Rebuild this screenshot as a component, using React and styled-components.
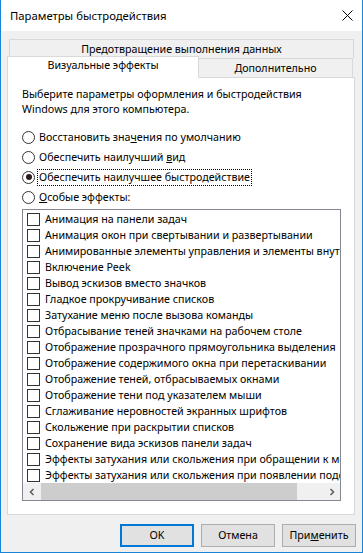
import React from 'react';
import styled, { createGlobalStyle } from 'styled-components';

const Global = createGlobalStyle`
  html, body {
    margin: 0;
    padding: 0;
    background: #ffffff;
  }
  body {
    font-family: "Segoe UI", "Noto Sans", sans-serif;
    font-size: 10.7px;
    color: #000000;
  }
`;

const Window = styled.div`
  width: 363px;
  height: 553px;
  box-sizing: border-box;
  border: 1px solid #1883d7;
  border-top: none;
  background: #f0f0f0;
  display: flex;
  flex-direction: column;
`;

const TitleBar = styled.div`
  height: 31px;
  flex: none;
  background: #ffffff;
  display: flex;
  align-items: center;
  justify-content: space-between;
  padding: 0 9px 0 9px;
  font-size: 11.3px;
`;

const Title = styled.span`
  line-height: 15px;
`;

const CloseButton = styled.div`
  width: 12px;
  height: 12px;
  display: flex;
  align-items: center;
  justify-content: center;
`;

const Body = styled.div`
  flex: 1;
  padding: 8px 7px 0 6px;
  display: flex;
  flex-direction: column;
`;

const TabStrip = styled.div`
  display: flex;
  flex-direction: column;
`;

const TabRow = styled.div`
  display: flex;
  align-items: flex-end;
  height: ${(p) => p.$h}px;
  margin-top: ${(p) => p.$mt || 0}px;
  padding-left: ${(p) => p.$pl || 0}px;
  position: relative;
  z-index: ${(p) => p.$z || 0};
`;

const Tab = styled.div`
  box-sizing: border-box;
  width: ${(p) => p.$w}px;
  height: ${(p) => (p.$active ? 22 : 19)}px;
  margin-bottom: ${(p) => (p.$active ? -1 : 0)}px;
  margin-left: ${(p) => p.$ml || 0}px;
  border: 1px solid #d9d9d9;
  border-bottom: none;
  background: ${(p) => (p.$active ? '#ffffff' : '#f0f0f0')};
  text-align: center;
  line-height: 15px;
  padding-top: ${(p) => (p.$active ? 1 : 2)}px;
  position: relative;
  z-index: ${(p) => (p.$active ? 2 : 1)};
  white-space: nowrap;
`;

const Panel = styled.div`
  box-sizing: border-box;
  height: 438px;
  background: #ffffff;
  border: 1px solid #d9d9d9;
  padding: 9px 12px 0 14px;
  display: flex;
  flex-direction: column;
`;

const Intro = styled.p`
  margin: 0 0 10px 0;
  line-height: 15px;
`;

const RadioRow = styled.div`
  height: 20px;
  display: flex;
  align-items: center;
`;

const RadioCircle = styled.span`
  box-sizing: border-box;
  width: 13px;
  height: 13px;
  border-radius: 50%;
  border: 1px solid #333333;
  background: #ffffff;
  display: flex;
  align-items: center;
  justify-content: center;
  flex: none;

  &::after {
    content: '';
    display: ${(p) => (p.$checked ? 'block' : 'none')};
    width: 6px;
    height: 6px;
    border-radius: 50%;
    background: #2b1a1a;
  }
`;

const RadioLabel = styled.span`
  margin-left: 2px;
  padding: 0 1px;
  line-height: 15px;
  border: 1px dotted ${(p) => (p.$focus ? '#000000' : 'transparent')};
  white-space: nowrap;
`;

const ListBox = styled.div`
  box-sizing: border-box;
  margin-top: 2px;
  width: 319px;
  height: 292px;
  border: 1px solid #828790;
  background: #ffffff;
  padding-top: 1px;
  display: flex;
  flex-direction: column;
  overflow: hidden;
`;

const Items = styled.div`
  flex: 1;
  overflow: hidden;
`;

const Item = styled.div`
  height: 16px;
  display: flex;
  align-items: center;
  padding-left: 4px;
  white-space: nowrap;
`;

const CheckBox = styled.span`
  box-sizing: border-box;
  width: 13px;
  height: 13px;
  border: 1px solid #333333;
  background: #ffffff;
  flex: none;
  margin-right: 5px;
`;

const HScroll = styled.div`
  height: 17px;
  flex: none;
  background: #f0f0f0;
  display: flex;
  align-items: center;
`;

const ScrollArrow = styled.div`
  width: 17px;
  height: 17px;
  flex: none;
  display: flex;
  align-items: center;
  justify-content: center;
`;

const Track = styled.div`
  flex: 1;
  height: 17px;
  display: flex;
  align-items: stretch;
`;

const Thumb = styled.div`
  width: 256px;
  margin-left: 1px;
  background: #cdcdcd;
`;

const Buttons = styled.div`
  display: flex;
  justify-content: flex-end;
  gap: 7px;
  margin-top: 9px;
  margin-right: -1px;
`;

const Button = styled.div`
  box-sizing: border-box;
  width: 74px;
  height: 23px;
  background: #e1e1e1;
  border: 1px solid ${(p) => (p.$default ? '#0078d7' : '#adadad')};
  box-shadow: ${(p) => (p.$default ? 'inset 0 0 0 1px #0078d7' : 'none')};
  display: flex;
  align-items: center;
  justify-content: center;
  line-height: 15px;
`;

const effects = [
  'Анимация на панели задач',
  'Анимация окон при свертывании и развертывании',
  'Анимированные элементы управления и элементы внутри окна',
  'Включение Peek',
  'Вывод эскизов вместо значков',
  'Гладкое прокручивание списков',
  'Затухание меню после вызова команды',
  'Отбрасывание теней значками на рабочем столе',
  'Отображение прозрачного прямоугольника выделения',
  'Отображение содержимого окна при перетаскивании',
  'Отображение теней, отбрасываемых окнами',
  'Отображение тени под указателем мыши',
  'Сглаживание неровностей экранных шрифтов',
  'Скольжение при раскрытии списков',
  'Сохранение вида эскизов панели задач',
  'Эффекты затухания или скольжения при обращении к меню',
  'Эффекты затухания или скольжения при появлении подсказок',
];

const Chevron = ({ dir }) => (
  <svg width="8" height="8" viewBox="0 0 8 8">
    <path
      d={dir === 'left' ? 'M5.5 1 L2.5 4 L5.5 7' : 'M2.5 1 L5.5 4 L2.5 7'}
      fill="none"
      stroke="#606060"
      strokeWidth="1.6"
    />
  </svg>
);

export default function App() {
  return (
    <>
      <Global />
      <Window>
        <TitleBar>
          <Title>Параметры быстродействия</Title>
          <CloseButton>
            <svg width="11" height="11" viewBox="0 0 11 11">
              <path d="M0.5 0.5 L10.5 10.5 M10.5 0.5 L0.5 10.5" stroke="#000" strokeWidth="1" />
            </svg>
          </CloseButton>
        </TitleBar>
        <Body>
          <TabStrip>
            <TabRow $h={19} $pl={2}>
              <Tab $w={345}>Предотвращение выполнения данных</Tab>
            </TabRow>
            <TabRow $h={21} $mt={-2} $z={2}>
              <Tab $w={192} $active>Визуальные эффекты</Tab>
              <Tab $w={155} $ml={-1}>Дополнительно</Tab>
            </TabRow>
          </TabStrip>
          <Panel>
            <Intro>
              Выберите параметры оформления и быстродействия
              <br />
              Windows для этого компьютера.
            </Intro>
            <RadioRow>
              <RadioCircle />
              <RadioLabel>
                Восстановить зна<u>ч</u>ения по умолчанию
              </RadioLabel>
            </RadioRow>
            <RadioRow>
              <RadioCircle />
              <RadioLabel>
                Обеспечить наилучший <u>в</u>ид
              </RadioLabel>
            </RadioRow>
            <RadioRow>
              <RadioCircle $checked />
              <RadioLabel $focus>Обеспечить наилучшее быстродействие</RadioLabel>
            </RadioRow>
            <RadioRow>
              <RadioCircle />
              <RadioLabel>
                <u>О</u>собые эффекты:
              </RadioLabel>
            </RadioRow>
            <ListBox>
              <Items>
                {effects.map((e) => (
                  <Item key={e}>
                    <CheckBox />
                    {e}
                  </Item>
                ))}
              </Items>
              <HScroll>
                <ScrollArrow>
                  <Chevron dir="left" />
                </ScrollArrow>
                <Track>
                  <Thumb />
                </Track>
                <ScrollArrow>
                  <Chevron dir="right" />
                </ScrollArrow>
              </HScroll>
            </ListBox>
          </Panel>
          <Buttons>
            <Button $default>OK</Button>
            <Button>Отмена</Button>
            <Button>
              При<u>м</u>енить
            </Button>
          </Buttons>
        </Body>
      </Window>
    </>
  );
}
